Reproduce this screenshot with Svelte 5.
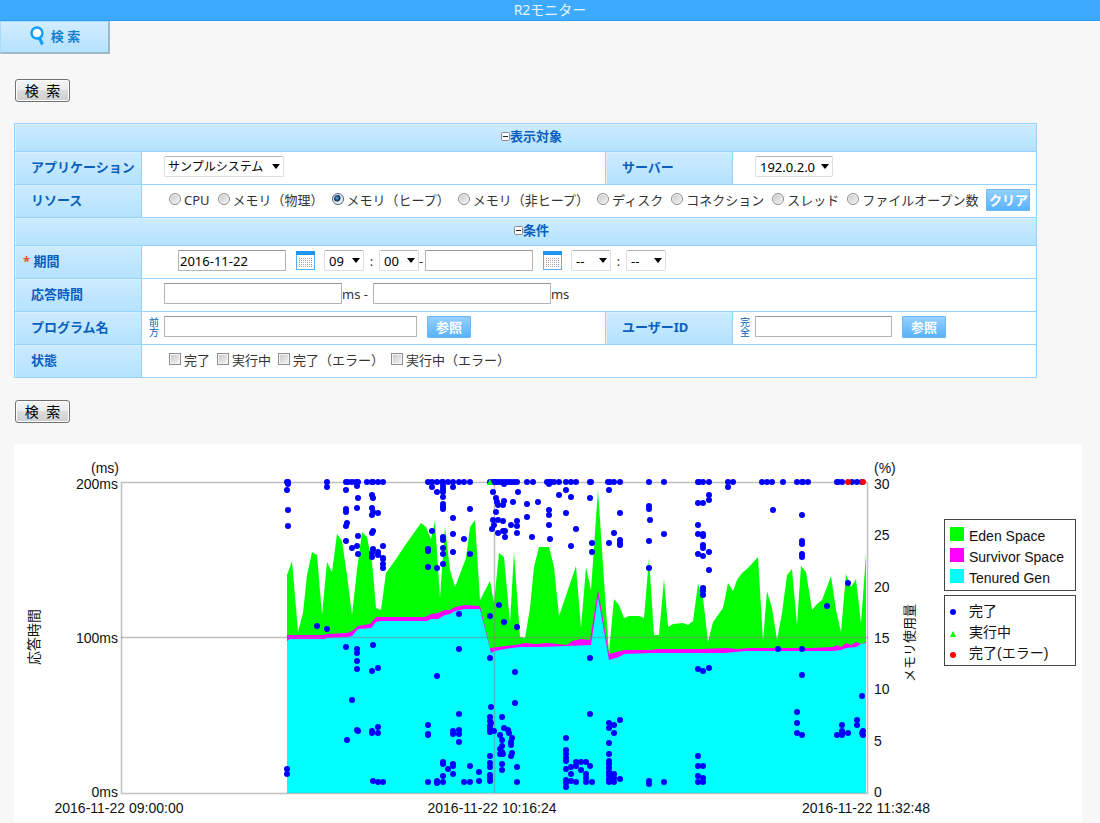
<script lang="ts">
  type Point = [number, number];

  const resources = [
    'CPU',
    'メモリ（物理）',
    'メモリ（ヒープ）',
    'メモリ（非ヒープ）',
    'ディスク',
    'コネクション',
    'スレッド',
    'ファイルオープン数',
  ];
  const states = ['完了', '実行中', '完了（エラー）', '実行中（エラー）'];
  const hours = ['--', '09', '10', '11', '12'];
  const minutes = ['--', '00', '15', '30', '45'];

  let resource = $state('メモリ（ヒープ）');
  let dateFrom = $state('2016-11-22');
  let dateTo = $state('');
  let showTarget = $state(true);
  let showCondition = $state(true);

  const baseline = 793;

  const eden: Point[] = [
    [287, 575], [292, 561], [298, 632], [303, 613], [307, 575], [312, 552], [317, 555], [322, 615],
    [327, 562], [332, 572], [337, 534], [342, 541], [347, 575], [352, 615], [357, 570], [362, 532],
    [367, 537], [372, 562], [376, 608], [381, 610], [386, 573], [396, 559], [406, 544], [416, 530],
    [421, 523], [426, 527], [431, 539], [435, 521], [440, 598], [445, 527], [450, 570], [455, 587],
    [466, 558], [470, 527], [475, 520], [480, 600], [490, 581], [494, 603], [499, 553], [504, 557],
    [510, 623], [514, 552], [520, 637], [525, 638], [530, 608], [534, 567], [539, 547], [549, 547],
    [554, 567], [559, 616], [576, 566], [581, 628], [586, 567], [591, 590], [598, 490], [604, 580],
    [609, 653], [614, 599], [619, 605], [624, 618], [629, 616], [639, 616], [644, 618], [649, 558],
    [654, 635], [659, 635], [664, 579], [668, 627], [673, 624], [683, 623], [688, 625], [693, 621],
    [698, 584], [703, 598], [708, 642], [713, 622], [723, 608], [728, 583], [733, 591], [737, 580],
    [742, 573], [747, 569], [758, 557], [763, 641], [767, 591], [772, 608], [777, 640], [782, 613],
    [787, 575], [792, 569], [797, 625], [801, 566], [806, 572], [812, 610], [817, 604], [822, 600],
    [827, 587], [831, 576], [836, 610], [841, 632], [846, 574], [851, 587], [856, 579], [861, 623],
    [866, 554],
  ];

  const survivor: Point[] = [
    [287, 635], [324, 635], [327, 634], [347, 633], [352, 631], [358, 626], [370, 624], [376, 617],
    [425, 617], [431, 614], [438, 613], [445, 610], [450, 610], [455, 607], [465, 605], [480, 606],
    [490, 648], [498, 647], [515, 645], [525, 643], [535, 644], [548, 643], [567, 645], [572, 641],
    [581, 639], [590, 640], [598, 590], [609, 654], [624, 650], [650, 650], [658, 649], [700, 649],
    [727, 648], [737, 649], [750, 648], [812, 648], [832, 647], [837, 645], [841, 647], [846, 643],
    [851, 645], [856, 642], [861, 644], [866, 642],
  ];

  const tenured: Point[] = [
    [287, 641], [290, 639], [324, 639], [327, 638], [347, 637], [352, 636], [358, 629], [371, 628],
    [376, 622], [380, 621], [427, 621], [431, 619], [438, 619], [445, 615], [450, 614], [455, 611],
    [465, 609], [480, 609], [491, 653], [495, 651], [505, 649], [520, 647], [540, 647], [567, 646],
    [591, 645], [598, 597], [609, 660], [619, 657], [624, 654], [650, 653], [725, 653], [745, 651],
    [832, 651], [841, 650], [846, 648], [856, 647], [861, 644], [866, 643],
  ];

  // Requests slower than the 200ms ceiling are pinned to the top line.
  const slow = [
    287, 288, 327, 346, 348, 352, 356, 358, 367, 372, 373, 378, 383, 428, 432, 437, 442, 443, 448,
    453, 459, 464, 470, 490, 493, 495, 496, 499, 502, 505, 508, 511, 514, 517, 527, 533, 547, 549,
    551, 554, 559, 566, 571, 576, 590, 591, 608, 610, 614, 620, 649, 664, 698, 699, 703, 709, 728,
    733, 762, 767, 772, 783, 797, 802, 803, 808, 837, 838, 842, 852, 857, 862,
  ];

  const done: [number, number[]][] = [
    [287, [490, 769, 774]], [288, [484, 510, 526]], [317, [626]], [327, [487, 629]],
    [346, [490, 509, 512, 526, 541, 647]], [347, [523, 740]], [352, [548, 700]],
    [357, [486, 508, 546, 649, 653, 661, 669, 730]], [358, [498, 536, 554, 731]],
    [372, [495, 508, 515, 533, 553, 557, 671, 731, 733]],
    [373, [498, 512, 531, 549, 645, 781]],
    [378, [513, 552, 555, 668, 727, 733, 782]], [383, [546, 558, 559, 564, 568, 782]],
    [428, [549, 551, 567, 725, 734, 735, 782]], [432, [487, 531]], [437, [492, 568, 676, 781, 783]],
    [443, [486, 489, 492, 497, 504, 507, 509, 537, 540, 548, 554, 564, 762, 764, 776, 782]],
    [448, [769]], [453, [487, 518, 534, 552, 731, 734, 764, 766, 774]],
    [459, [614, 649, 714, 730, 734, 742]], [464, [539, 782]], [470, [509, 554, 766, 782]],
    [479, [772, 781]], [490, [616, 658, 717, 721, 726, 729, 732, 756, 763, 767, 775, 778, 781]],
    [491, [707, 723]], [492, [529]], [493, [492, 520]], [494, [525, 731]], [496, [498, 512]],
    [497, [502]], [498, [505, 520, 533]], [499, [605]], [500, [735, 749, 754]],
    [502, [717, 740, 746, 752, 764, 770]], [503, [505, 521, 531, 754]],
    [504, [484, 501, 622, 728]], [505, [531, 537]], [508, [730]], [509, [733]],
    [511, [525, 742, 745, 756]], [512, [738, 753]], [513, [502]], [515, [672, 703]],
    [517, [521, 526, 533, 627, 767, 782]], [518, [492]], [527, [504, 517]], [532, [537]],
    [538, [502]], [549, [484, 510, 515, 525]], [550, [539]], [559, [495]],
    [566, [490, 513, 738, 750, 754, 758, 761, 769, 780, 783, 787]],
    [571, [497, 546, 767, 774, 781]], [576, [529, 762, 766, 782]], [581, [762, 770]],
    [586, [762, 774, 778, 782]], [590, [498, 658, 714, 766]], [592, [543, 552, 782]],
    [609, [490, 543, 723, 728, 743, 754, 761, 764, 768, 772, 775, 779, 782]],
    [614, [533, 725, 733, 774, 778, 782]], [620, [513, 540, 543, 545, 720, 779]],
    [649, [506, 509, 541, 568, 781, 784]], [650, [520]], [664, [534, 782]],
    [698, [503, 525, 534, 554, 669, 756, 766, 776, 782]],
    [703, [503, 534, 536, 545, 548, 556, 588, 591, 595, 671, 766, 778, 782]],
    [709, [495, 500, 552, 570, 668]], [728, [487]], [773, [510]], [778, [649]],
    [797, [712, 723, 733]], [802, [515, 541, 544, 554, 557, 649, 675, 735]], [827, [606]],
    [837, [735]], [842, [725, 731, 733, 735]], [848, [583, 733]], [857, [720, 725]],
    [862, [696, 733]], [863, [731, 735]],
  ];
  const dots: Point[] = [
    ...slow.map((x): Point => [x, 482]),
    ...done.flatMap(([x, ys]) => ys.map((y): Point => [x, y])),
  ];
  const failed = [848, 863];

  const percentTicks = [30, 25, 20, 15, 10, 5, 0];
  const areas = [
    { name: 'Eden Space', color: '#00ff00', points: eden },
    { name: 'Survivor Space', color: '#ff00ff', points: survivor },
    { name: 'Tenured Gen', color: '#00ffff', points: tenured },
  ];

  function areaPoints(line: Point[]): string {
    const first = line[0][0];
    const last = line[line.length - 1][0];
    return `${first},${baseline} ${line.map((p) => p.join(',')).join(' ')} ${last},${baseline}`;
  }
</script>

{#snippet calendar()}
  <svg width="19" height="19" viewBox="0 0 19 19" aria-hidden="true">
    <rect x="0.5" y="0.5" width="18" height="18" fill="#fff" stroke="#57b0f5" />
    <rect width="19" height="4" fill="#1e96f0" />
    <path d="M3 7.5h1M3 9.5h1M3 11.5h1M3 13.5h1M3 15.5h1" stroke="#f08080" />
    <path
      d="M5 7.5h9M5 9.5h9M5 11.5h9M5 13.5h9M5 15.5h9"
      stroke="#aaa"
      stroke-dasharray="1 1"
    />
    <path d="M15 7.5h1M15 9.5h1M15 11.5h1M15 13.5h1M15 15.5h1" stroke="#7a7af0" />
  </svg>
{/snippet}

{#snippet time(name: string, options: string[], value: string)}
  <span class="select">
    <select class="short" aria-label={name} {value}>
      {#each options as option}
        <option>{option}</option>
      {/each}
    </select>
  </span>
{/snippet}

{#snippet toggleIcon(open: boolean)}
  <svg width="9" height="9" viewBox="0 0 9 9" aria-hidden="true">
    <rect x="0.5" y="0.5" width="8" height="8" rx="1" fill="#fff" stroke="#888" />
    <path d={open ? 'M2 4.5h5' : 'M2 4.5h5M4.5 2v5'} stroke="#222" />
  </svg>
{/snippet}

<header class="title">R2モニター</header>
<nav>
  <a class="tab" href="#search">
    <svg width="16" height="20" viewBox="0 0 16 20" aria-hidden="true">
      <circle cx="8" cy="7" r="5.5" fill="#fff" stroke="#0f9dfa" stroke-width="2.4" />
      <path d="M10.5 12l3 6.5" stroke="#0f9dfa" stroke-width="3" />
    </svg>
    検 索
  </a>
</nav>

<main>
  <form id="search" onsubmit={(e) => e.preventDefault()}>
    <button class="submit">検&nbsp;&nbsp;索</button>

    <table>
      <colgroup>
        <col class="label-col" />
        <col />
        <col class="label-col" />
        <col class="side-col" />
      </colgroup>
      <tbody>
        <tr class="section">
          <th colspan="4">
            <button type="button" class="toggle" onclick={() => (showTarget = !showTarget)}>
              {@render toggleIcon(showTarget)}表示対象
            </button>
          </th>
        </tr>
        {#if showTarget}
          <tr>
            <th><label for="application">アプリケーション</label></th>
            <td>
              <div class="row">
                <span class="select">
                  <select id="application" class="long"><option>サンプルシステム</option></select>
                </span>
              </div>
            </td>
            <th><label for="server">サーバー</label></th>
            <td>
              <div class="row">
                <span class="select">
                  <select id="server" class="medium"><option>192.0.2.0</option></select>
                </span>
              </div>
            </td>
          </tr>
          <tr>
            <th>リソース</th>
            <td colspan="3">
              <div class="row choices radios">
                {#each resources as name}
                  <label><input type="radio" name="resource" value={name} bind:group={resource} />{name}</label>
                {/each}
                <button type="button" class="small" onclick={() => (resource = '')}>クリア</button>
              </div>
            </td>
          </tr>
        {/if}
        <tr class="section">
          <th colspan="4">
            <button type="button" class="toggle" onclick={() => (showCondition = !showCondition)}>
              {@render toggleIcon(showCondition)}条件
            </button>
          </th>
        </tr>
        {#if showCondition}
          <tr>
            <th class="required"><span class="mark">*</span> <label for="date-from">期間</label></th>
            <td colspan="3">
              <div class="row period">
                <input id="date-from" class="date" type="text" bind:value={dateFrom} />
                <button type="button" class="calendar" aria-label="開始日">{@render calendar()}</button>
                {@render time('開始時', hours, '09')}
                <span class="colon">:</span>
                {@render time('開始分', minutes, '00')}
                <span class="dash">-</span>
                <input class="date" type="text" aria-label="終了日" bind:value={dateTo} />
                <button type="button" class="calendar" aria-label="終了日を選択">{@render calendar()}</button>
                {@render time('終了時', hours, '--')}
                <span class="colon">:</span>
                {@render time('終了分', minutes, '--')}
              </div>
            </td>
          </tr>
          <tr>
            <th><label for="time-min">応答時間</label></th>
            <td colspan="3">
              <div class="row">
                <input id="time-min" class="time" type="text" />
                <span class="unit">ms -</span>
                <input class="time" type="text" aria-label="応答時間の上限" />
                <span>ms</span>
              </div>
            </td>
          </tr>
          <tr>
            <th><label for="program">プログラム名</label></th>
            <td>
              <div class="row matched">
                <span class="match">前方</span>
                <input id="program" class="program" type="text" />
                <button type="button" class="small">参照</button>
              </div>
            </td>
            <th><label for="user">ユーザーID</label></th>
            <td>
              <div class="row matched">
                <span class="match">完全</span>
                <input id="user" class="user" type="text" />
                <button type="button" class="small">参照</button>
              </div>
            </td>
          </tr>
          <tr>
            <th>状態</th>
            <td colspan="3">
              <div class="row choices">
                {#each states as name}
                  <label><input type="checkbox" />{name}</label>
                {/each}
              </div>
            </td>
          </tr>
        {/if}
      </tbody>
    </table>

    <button class="submit">検&nbsp;&nbsp;索</button>
  </form>
</main>

<section class="chart">
  <svg viewBox="14 444 1068 378" role="img" aria-label="応答時間とメモリ使用量">
    <text x="119" y="473" text-anchor="end">(ms)</text>
    <text x="118" y="489" text-anchor="end">200ms</text>
    <text x="118" y="643" text-anchor="end">100ms</text>
    <text x="118" y="797" text-anchor="end">0ms</text>
    <text x="119" y="813" text-anchor="middle">2016-11-22 09:00:00</text>
    <text x="492" y="813" text-anchor="middle">2016-11-22 10:16:24</text>
    <text x="866" y="813" text-anchor="middle">2016-11-22 11:32:48</text>
    <text x="874" y="473">(%)</text>
    {#each percentTicks as tick, i}
      <text x="874" y={489 + Math.round((i * 308) / 6)}>{tick}</text>
    {/each}
    <text transform="translate(39 637) rotate(-90)" text-anchor="middle">応答時間</text>
    <text class="narrow" transform="translate(914 643) rotate(-90)" text-anchor="middle">メモリ使用量</text>

    {#each areas as area}
      <polygon points={areaPoints(area.points)} fill={area.color} />
    {/each}

    <g class="grid">
      <rect x="121.5" y="482.5" width="746" height="311" />
      <path d="M121 637.5h747M494.5 482v311" />
    </g>

    {#each dots as [x, y]}
      <circle cx={x} cy={y} r="3" fill="#0000ff" />
    {/each}
    {#each failed as x}
      <circle cx={x} cy="482" r="3" fill="#ff0000" />
    {/each}
    <path d="M490 479l3 6h-6z" fill="#00ff00" />

    <g class="frame">
      <rect x="944.5" y="519.5" width="131" height="71" />
      <rect x="944.5" y="595.5" width="131" height="70" />
    </g>
    {#each areas as area, i}
      <rect x="950" y={527 + i * 21} width="14" height="14" fill={area.color} />
      <text x="969" y={541 + i * 21}>{area.name}</text>
    {/each}
    <circle cx="953" cy="612" r="3" fill="#0000ff" />
    <text x="969" y="616">完了</text>
    <path d="M953 631l3 6h-6z" fill="#00ff00" />
    <text x="969" y="637">実行中</text>
    <circle cx="953" cy="655" r="3" fill="#ff0000" />
    <text x="969" y="658">完了(エラー)</text>
  </svg>
</section>

<style>
  :global(body) {
    background: #f7f7f7;
    color: #333;
    font-family: 'Noto Sans', 'Noto Sans CJK JP', sans-serif;
    font-size: 13px;
  }

  .title {
    height: 20px;
    line-height: 20px;
    background: #3eaaff;
    border-bottom: 1px solid #2b9bf5;
    color: #e4f4ff;
    font-size: 14px;
    text-align: center;
  }

  nav {
    display: flex;
  }

  .tab {
    display: flex;
    align-items: center;
    justify-content: center;
    gap: 6px;
    box-sizing: border-box;
    width: 110px;
    height: 33px;
    padding-bottom: 3px;
    border: 1px solid #a8dcff;
    border-right: 2px solid #9db8c9;
    border-bottom: 2px solid #9db8c9;
    background: linear-gradient(#d2edff, #b3e2ff);
    color: #1480d0;
    font-weight: bold;
    text-decoration: none;
  }

  main {
    margin: 25px 63px 0 14px;
  }

  .submit {
    display: block;
    width: 55px;
    height: 23px;
    margin: 0 0 0 1px;
    padding: 0;
    border: 1px solid #707070;
    border-radius: 3px;
    background: linear-gradient(#f4f4f4 0, #ebebeb 50%, #dcdcdc 50%, #cfcfcf);
    box-shadow: inset 0 0 0 1px #fff;
    color: #000;
    font-family: inherit;
    font-size: 14px;
    line-height: 20px;
  }

  table {
    width: 100%;
    margin: 21px 0 22px;
    border-collapse: collapse;
    table-layout: fixed;
    background: #fff;
  }

  .label-col {
    width: 127px;
  }

  .side-col {
    width: 304px;
  }

  tr {
    height: 33px;
  }

  tr.section {
    height: 28px;
  }

  th,
  td {
    padding: 0;
    border: 1px solid #94d3ff;
  }

  th {
    padding: 0 0 2px 16px;
    background: linear-gradient(#cdebff, #b3e2ff);
    box-shadow: inset 1px 1px 0 #d9f0ff;
    color: #0a5fbe;
    line-height: 18px;
    text-align: left;
    white-space: nowrap;
  }

  .section th {
    padding: 0 0 3px 12px;
    text-align: center;
  }

  th.required {
    padding-left: 8px;
  }

  .mark {
    color: #f05020;
  }

  .toggle {
    display: inline-flex;
    align-items: center;
    padding: 0;
    border: 0;
    background: none;
    color: inherit;
    font: inherit;
    cursor: pointer;
  }

  .row {
    display: flex;
    align-items: center;
    height: 21px;
    padding: 0 0 3px 22px;
    line-height: 20px;
    white-space: nowrap;
  }

  .row.period {
    padding-left: 36px;
  }

  .row.matched {
    padding-left: 7px;
  }

  .row.choices {
    gap: 7px;
    padding-left: 27px;
  }

  .row.radios {
    gap: 8px;
  }

  .choices label {
    display: flex;
    align-items: center;
    gap: 3px;
  }

  input {
    box-sizing: border-box;
    margin: 0;
    font-family: inherit;
    font-size: 13px;
  }

  input[type='text'] {
    height: 21px;
    padding: 0 1px;
    border: 1px solid #b5b5b5;
    border-top-color: #999;
    background: #fff;
    color: #000;
  }

  input[type='radio'],
  input[type='checkbox'] {
    appearance: none;
    width: 12px;
    height: 12px;
    margin-bottom: 2px;
    border: 1px solid #8e8f8f;
    background: linear-gradient(135deg, #c4c6c9, #f6f6f6);
    box-shadow: inset 0 0 0 1px #f4f4f4;
  }

  input[type='radio'] {
    border-radius: 50%;
  }

  input[type='radio']:checked {
    border-color: #4b6a83;
    background: radial-gradient(circle at 40% 40%, #5aa8e0 0, #0b2c52 3px, #e4e9ee 4px);
  }

  .date {
    width: 108px;
  }

  .time {
    width: 178px;
  }

  .program {
    width: 253px;
  }

  .user {
    width: 137px;
  }

  .match {
    width: 10px;
    margin-right: 5px;
    color: #0a5fbe;
    font-size: 10px;
    line-height: 10px;
    white-space: normal;
    word-break: break-all;
  }

  .unit {
    margin-right: 5px;
  }

  .colon {
    width: 15px;
    text-align: center;
  }

  .dash {
    width: 6px;
  }

  .calendar {
    display: flex;
    margin: 0 9px 0 10px;
    padding: 0;
    border: 0;
    background: none;
    cursor: pointer;
  }

  .select {
    position: relative;
    display: flex;
  }

  .select::after {
    content: '';
    position: absolute;
    top: 8px;
    right: 4px;
    border: 4px solid transparent;
    border-top: 5px solid #000;
    border-bottom: 0;
    pointer-events: none;
  }

  select {
    appearance: none;
    box-sizing: border-box;
    height: 21px;
    margin: 0;
    padding: 0 4px;
    border: 1px solid #ddd;
    border-top-color: #b5b5b5;
    border-radius: 2px;
    background: #fff;
    color: #000;
    font-family: inherit;
    font-size: 13px;
  }

  .short {
    width: 40px;
  }

  .medium {
    width: 78px;
  }

  .long {
    width: 120px;
    padding: 0 3px;
    font-size: 12px;
  }

  .small {
    width: 44px;
    height: 22px;
    margin-left: 10px;
    padding: 0;
    border: 1px solid #6cb8f5;
    border-radius: 1px;
    background: linear-gradient(#94d0ff, #58b2fb);
    color: #fff;
    font-family: inherit;
    font-size: 13px;
    font-weight: bold;
    line-height: 18px;
    text-align: center;
    cursor: pointer;
  }

  .choices .small {
    margin-left: 0;
  }

  .chart {
    margin: 21px 18px 0 14px;
    background: #fff;
  }

  .chart svg {
    display: block;
    width: 100%;
  }

  .chart text {
    fill: #111;
    font-family: 'Liberation Sans', 'Noto Sans CJK JP', sans-serif;
    font-size: 14px;
  }

  .chart text.narrow {
    font-size: 13px;
  }

  .grid {
    fill: none;
    stroke: #808080;
    stroke-opacity: 0.5;
    stroke-width: 1.5;
  }

  .frame {
    fill: #fff;
    stroke: #444;
  }
</style>
